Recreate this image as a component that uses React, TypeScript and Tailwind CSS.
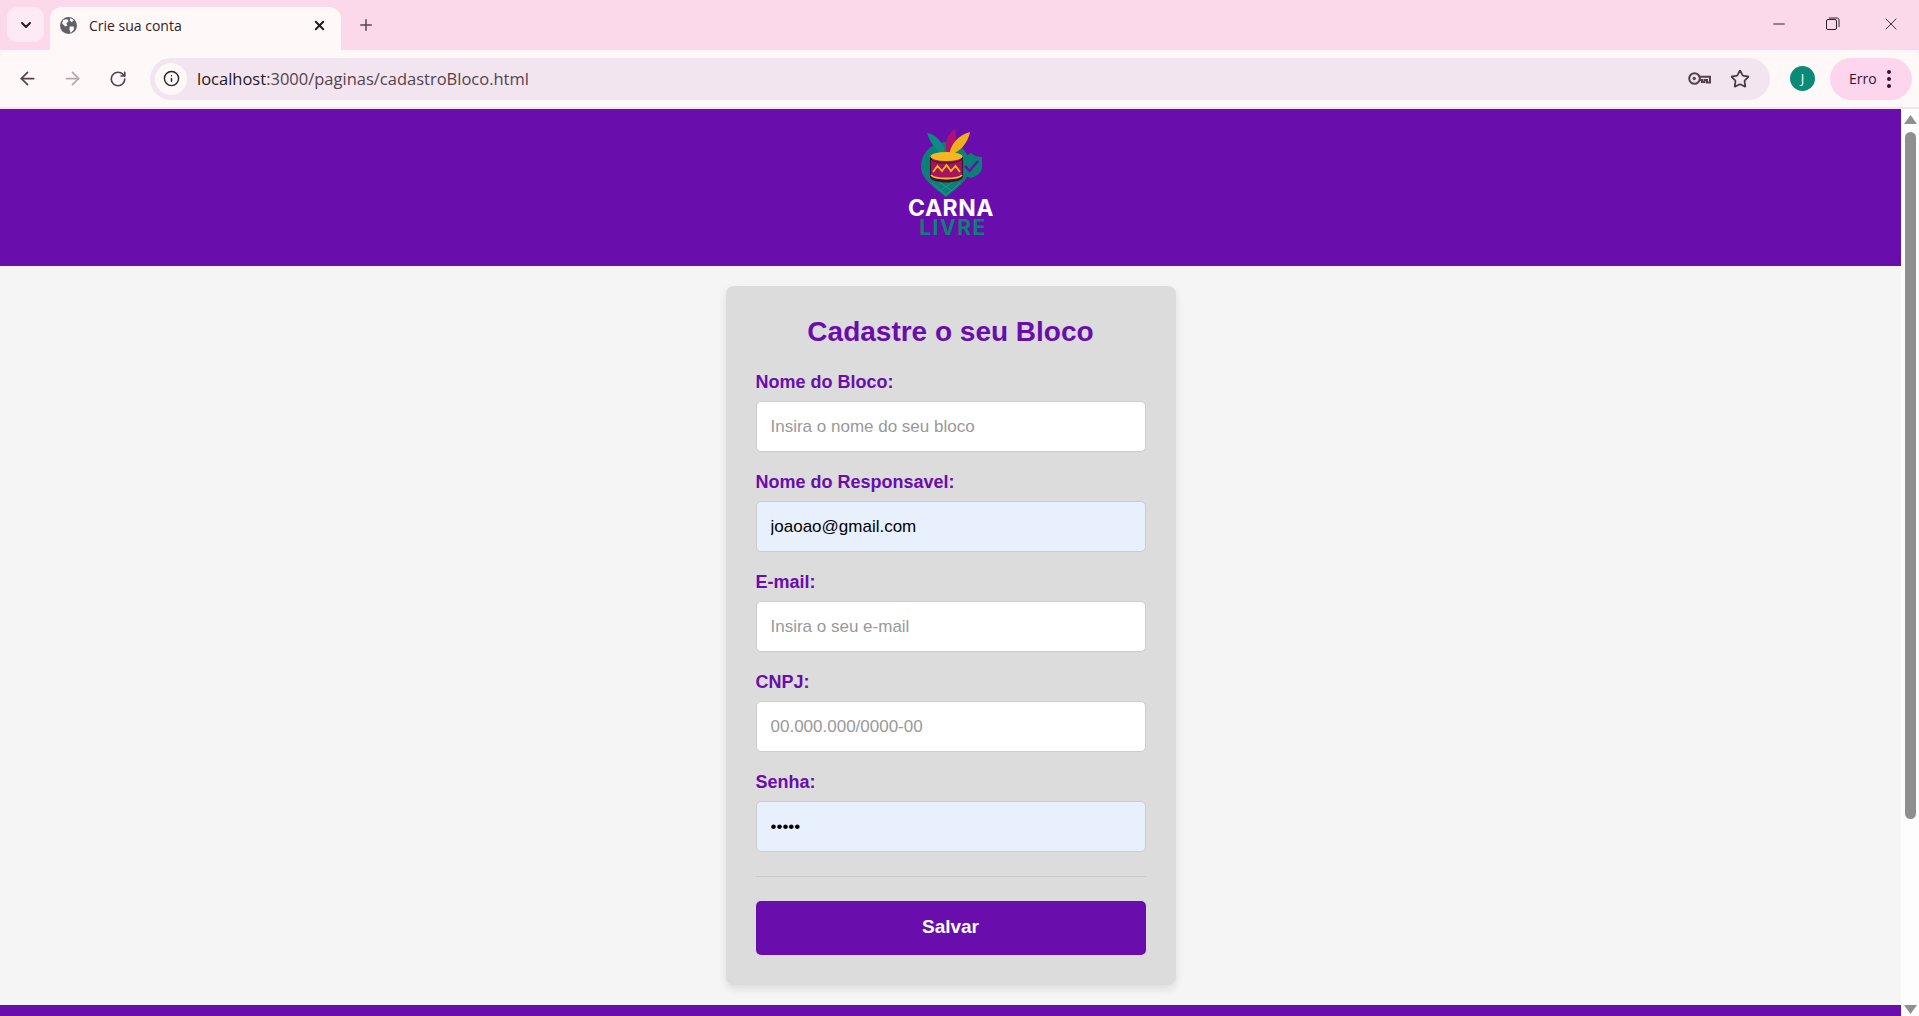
import React from "react";
import { ArrowLeft, ArrowRight, RotateCw, Info, Star, Plus, X, ChevronDown, Minus } from "lucide-react";

const PURPLE = "bg-[#6a0dad]";

function Logo() {
  return (
    <div className="relative w-[140px] h-[130px]">
      <svg viewBox="0 0 140 130" width="140" height="130" className="absolute inset-0">
        <path d="M66 27 C52 27 41 38 41 52 C41 64 56 74 66 82 C76 74 90 64 90 52 C90 38 80 27 66 27Z" fill="#0c7f78" />
        <path d="M52 68 L66 80 L80 68 M58 66 L72 76 M74 66 L60 76" stroke="#2d9a8f" strokeWidth="0.8" fill="none" />
        <path d="M91 38 C86 41 84 42 80 42 L80 52 C80 58 85 61 91 63 C97 61 102 58 102 52 L102 42 C98 42 95 41 91 38Z" fill="#0c7f78" />
        <path d="M85 51 L89.5 56 L98 46" stroke="#6a0dad" strokeWidth="2.4" fill="none" />
        <path d="M47 18 C56 19 64 28 66 41 C58 38 50 28 47 18Z" fill="#0e8a86" />
        <path d="M75 14 C78 24 74 34 68 40 C63 32 66 20 75 14Z" fill="#b0116f" />
        <path d="M90 17 C88 28 80 37 69 41 C70 30 78 20 90 17Z" fill="#f0b01e" />
        <path d="M50 42 L50 62 C50 65 58 67.5 66.5 67.5 C75 67.5 83 65 83 62 L83 42Z" fill="#3d1030" />
        <path d="M51 44 L51 60 C51 62.5 59 64.5 66.5 64.5 C74 64.5 82 62.5 82 60 L82 44Z" fill="#a8125f" />
        <ellipse cx="66.5" cy="41.5" rx="16" ry="4.5" fill="#f4b81f" />
        <path d="M51 44 C53 47 60 48 66.5 48 C73 48 80 47 82 44" stroke="#3d1030" strokeWidth="1" fill="none" />
        <path d="M51 60 C53 62.5 60 63.5 66.5 63.5 C73 63.5 80 62.5 82 60" stroke="#f4b81f" strokeWidth="1.8" fill="none" />
        <path d="M53 57 L57.5 51 L62 56 L66.5 50 L71 56 L75.5 51 L80 57" stroke="#f4b81f" strokeWidth="1.8" fill="none" />
      </svg>
      <div className="absolute left-0 right-0 top-[83px] text-center text-white font-bold text-[23px] leading-[20px] tracking-[0.5px] font-['Inter',sans-serif] translate-x-[1px]">CARNA</div>
      <div className="absolute left-0 right-0 top-[104px] text-center text-[#0c7f78] font-bold text-[21px] leading-[18px] tracking-[1.5px] font-['Inter',sans-serif] translate-x-[3px]">LIVRE</div>
    </div>
  );
}

function Field({ label, placeholder, value, type = "text", last = false }: { label: string; placeholder?: string; value?: string; type?: string; last?: boolean }) {
  return (
    <div className={last ? "" : "mb-[19px]"}>
      <label className="block h-[20px] mb-[10px] text-[18px] leading-[22px] font-bold text-[#6a0dad]">{label}</label>
      <input
        type={type}
        readOnly
        placeholder={placeholder}
        value={value ?? ""}
        className={`block w-full h-[51px] px-[14px] text-[17px] border border-[#cccccc] rounded-[5px] text-black outline-none placeholder:text-[#999999] ${value ? "bg-[#e8f0fe]" : "bg-white"}`}
      />
    </div>
  );
}

function GlobeIcon() {
  return (
    <svg viewBox="0 0 16 16" width="17" height="17">
      <circle cx="8" cy="8" r="8" fill="#5f6368" />
      <path d="M3 2.5 L7 2 L8 4 L6 6 L7 8 L5 9 L2 6 Z M9 9 L13 9 L13 12 L10 15 L9 12 Z M10 1 L13 3 L11 5 L9 3 Z" fill="#fff8f9" />
    </svg>
  );
}

function KeyIcon() {
  return (
    <svg viewBox="0 0 23 13" width="23" height="13" fill="none" stroke="#54424c" strokeWidth="2">
      <circle cx="6.5" cy="6.5" r="5.3" />
      <circle cx="6.2" cy="6.5" r="1.4" fill="#54424c" strokeWidth="0.6" />
      <path d="M11.5 4.8 H22 V10.5 H19 V8 H16.5 V10 H14 V8 H11.5" />
    </svg>
  );
}

export default function App() {
  return (
    <div className="h-[1016px] w-full flex flex-col overflow-hidden font-['Liberation_Sans',Arial,sans-serif] bg-[#f5f5f5]">
      {/* tab strip */}
      <div className="h-[50px] shrink-0 bg-[#fbd9eb] flex items-end pl-[7px] relative font-['Open_Sans',sans-serif]">
        <div className="w-[37px] h-[35px] mb-[8px] rounded-[10px] bg-[#fdeaf4] flex items-center justify-center">
          <ChevronDown size={16} strokeWidth={3} className="text-[#2a1a24]" />
        </div>
        <div className="ml-[6px] w-[291px] h-[43px] bg-[#fff8f9] rounded-t-[12px] flex items-center pl-[10px] pr-[14px] pb-[6px]">
          <GlobeIcon />
          <span className="ml-[12px] flex-1 text-[14px] text-[#2b2228]">Crie sua conta</span>
          <X size={15} strokeWidth={3} className="text-[#1f1a1d]" />
        </div>
        <div className="ml-[15px] mb-[15px] w-[20px] h-[20px] flex items-center justify-center">
          <Plus size={18} strokeWidth={2} className="text-[#5a4450]" />
        </div>
        <div className="ml-auto flex items-center mb-[16px] pr-[18px] text-[#2a2226]">
          <Minus size={18} strokeWidth={1.3} className="mr-[38px]" />
          <svg viewBox="0 0 14 14" width="14" height="14" fill="none" stroke="#2a2226" strokeWidth="1" className="mr-[41px]">
            <rect x="0.5" y="2.5" width="10" height="10" rx="1.5" />
            <path d="M3 1 H11 C12.2 1 13 1.8 13 3 V10" />
          </svg>
          <X size={20} strokeWidth={1.1} />
        </div>
      </div>
      {/* toolbar */}
      <div className="h-[57px] shrink-0 bg-[#fff8f9] rounded-t-[10px] flex items-center pl-[17px] pr-[7px] font-['Open_Sans',sans-serif]">
        <ArrowLeft size={21} strokeWidth={2} className="text-[#54424c]" />
        <ArrowRight size={21} strokeWidth={2} className="ml-[24px] text-[#b3a8ae]" />
        <RotateCw size={18} strokeWidth={2.2} className="ml-[26px] text-[#54424c]" />
        <div className="ml-[23px] h-[42px] flex-1 rounded-full bg-[#f2e5ef] flex items-center pl-[5px] pr-[20px]">
          <div className="w-[32px] h-[32px] rounded-full bg-[#fff8f9] flex items-center justify-center">
            <Info size={17} strokeWidth={2} className="text-[#2a2226]" />
          </div>
          <span className="ml-[10px] flex-1 pt-[1px] text-[16.5px] leading-[20px] text-[#54424c]"><span className="text-[#1f1a1d]">localhost</span>:3000/paginas/cadastroBloco.html</span>
          <KeyIcon />
          <Star size={20} strokeWidth={2.1} className="ml-[19px] text-[#4a3a44]" />
        </div>
        <div className="ml-[20px] w-[25px] h-[25px] rounded-full bg-[#0b8a78] text-white text-[13px] flex items-center justify-center">J</div>
        <div className="ml-[15px] w-[82px] h-[42px] rounded-full bg-[#fdd6ee] flex items-center pl-[19px] text-[14px] text-[#3d1030]">
          Erro
          <span className="ml-[10px] flex flex-col gap-[3px]">
            <i className="block w-[4px] h-[4px] rounded-full bg-[#3d1030]" />
            <i className="block w-[4px] h-[4px] rounded-full bg-[#3d1030]" />
            <i className="block w-[4px] h-[4px] rounded-full bg-[#3d1030]" />
          </span>
        </div>
      </div>
      <div className="h-[2px] shrink-0 bg-[#f4e3ec]" />
      {/* page */}
      <div className="flex-1 min-h-0 flex">
        <div className="flex-1 min-w-0 flex flex-col">
          <header className={`h-[157px] shrink-0 ${PURPLE} flex items-start justify-center pt-[6px] pr-[1px]`}>
            <Logo />
          </header>
          <main className="flex-1 min-h-0 flex justify-center pt-[20px]">
            <form className="w-[450px] h-[699px] bg-[#dcdcdc] rounded-[8px] p-[30px] shadow-[0_4px_8px_rgba(0,0,0,0.1)]">
              <h1 className="text-[28px] leading-[32px] font-bold text-center text-[#6a0dad] mb-[23px]">Cadastre o seu Bloco</h1>
              <Field label="Nome do Bloco:" placeholder="Insira o nome do seu bloco" />
              <Field label="Nome do Responsavel:" value="joaoao@gmail.com" />
              <Field label="E-mail:" placeholder="Insira o seu e-mail" />
              <Field label="CNPJ:" placeholder="00.000.000/0000-00" />
              <Field label="Senha:" type="password" value="12345" last />
              <hr className="mt-[24px] mb-[24px] border-0 border-t border-[#cccccc]" />
              <button type="button" className={`w-full h-[54px] ${PURPLE} text-white text-[19px] leading-[50px] pb-[2px] font-bold rounded-[5px]`}>Salvar</button>
            </form>
          </main>
          <footer className={`h-[11px] shrink-0 ${PURPLE}`} />
        </div>
        {/* scrollbar */}
        <div className="w-[18px] shrink-0 bg-[#fdfdfd] flex flex-col items-center pt-[6px] pb-[2px]">
          <svg width="13" height="9" viewBox="0 0 13 9"><path d="M6.5 0 L13 9 H0Z" fill="#8f8f8f" /></svg>
          <div className="mt-[8px] w-[11px] h-[687px] rounded-full bg-[#8f8f8f]" />
          <svg width="13" height="9" viewBox="0 0 13 9" className="mt-auto"><path d="M0 0 H13 L6.5 9Z" fill="#8f8f8f" /></svg>
        </div>
      </div>
    </div>
  );
}
